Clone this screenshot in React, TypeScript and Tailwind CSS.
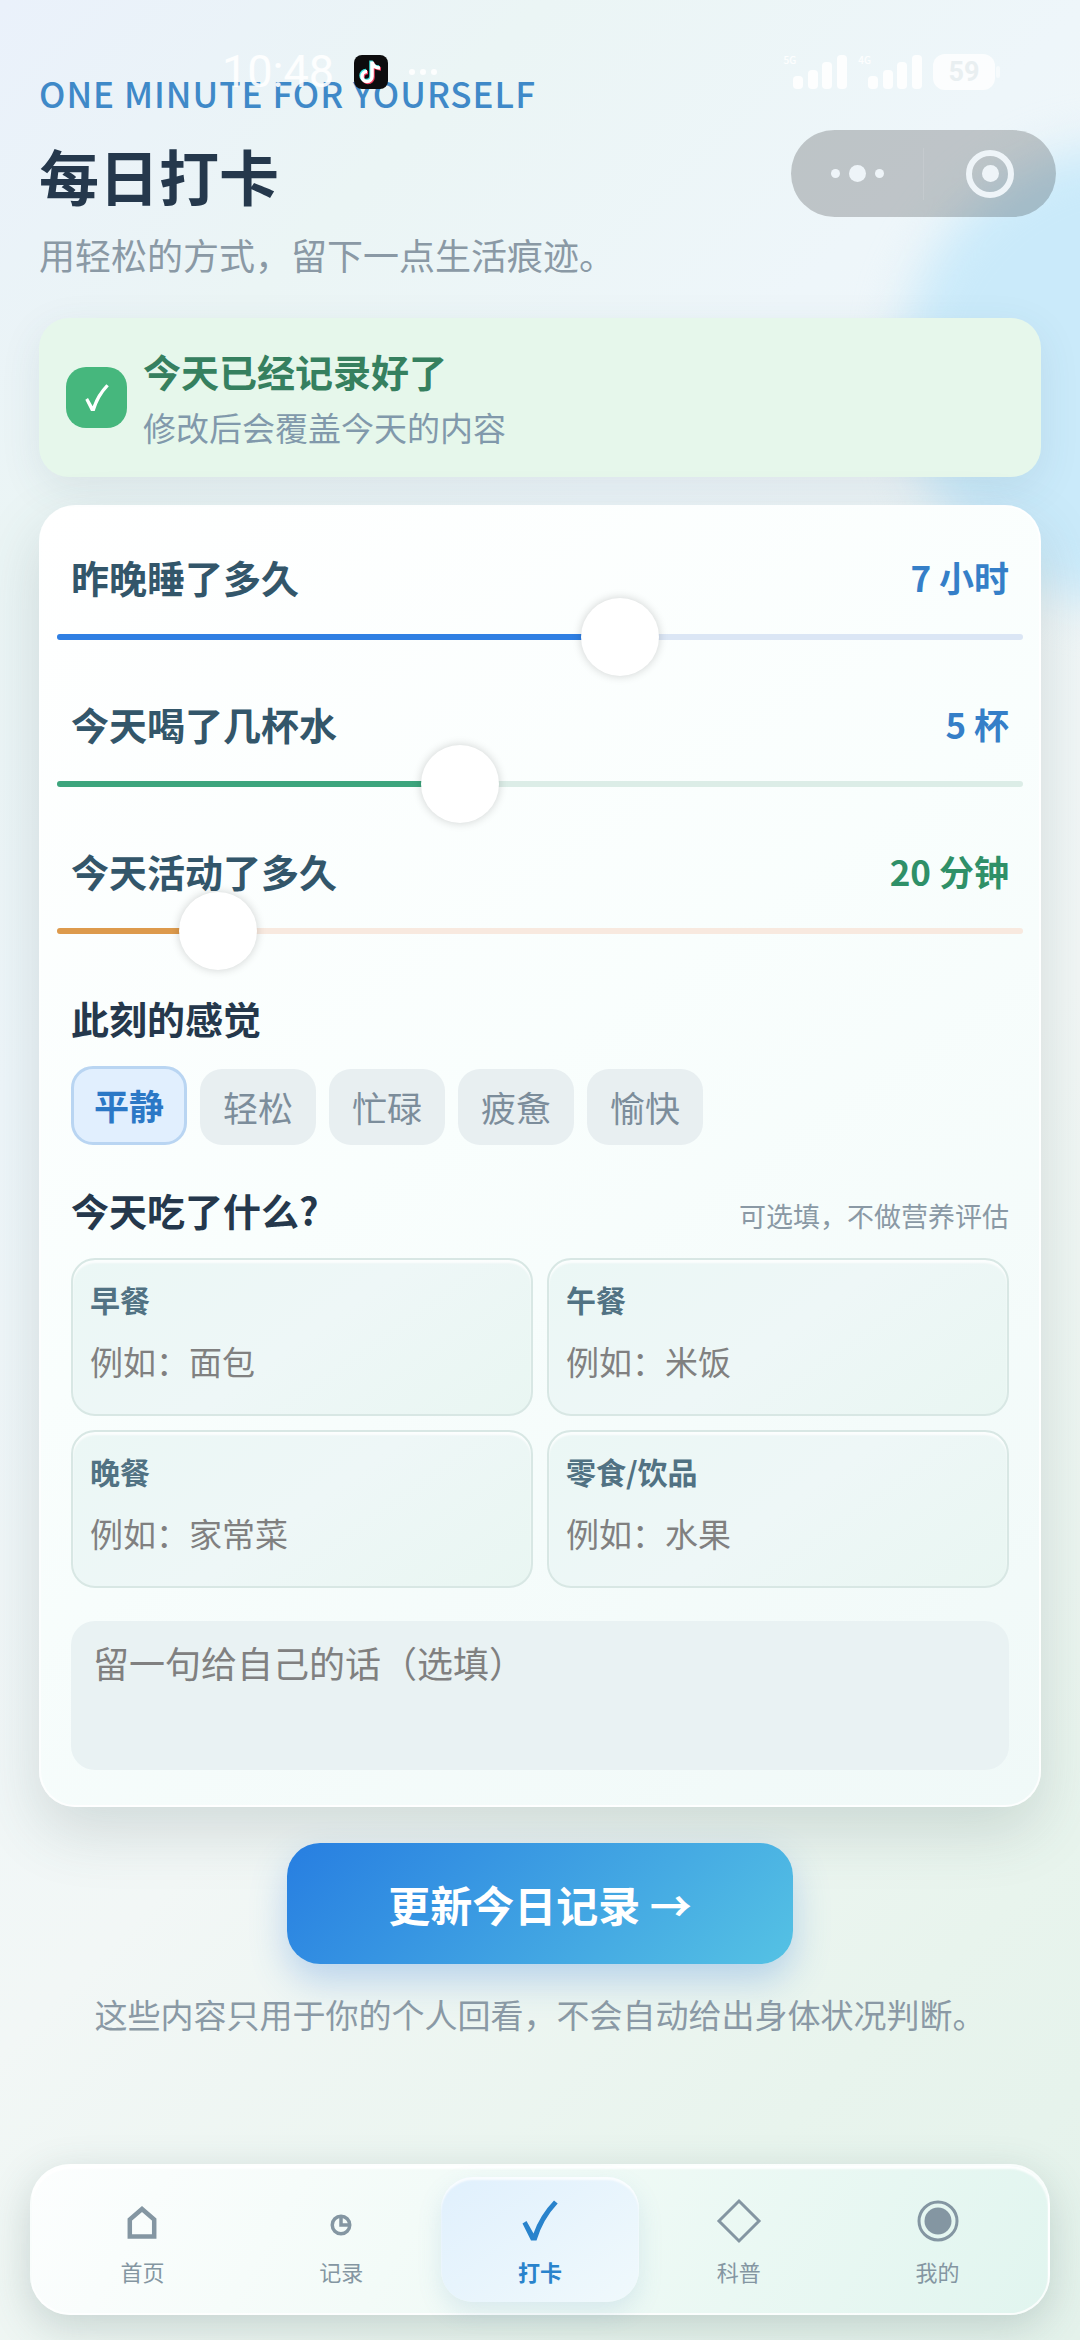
import { useState } from "react";

const sliderList = [
  {
    id: "sleep",
    label: "昨晚睡了多久",
    unit: "小时",
    max: 12,
    step: 1,
    value: 7,
    fill: "bg-[#2f7fe3]",
    track: "bg-[#dbe6f5]",
    text: "text-[#357fc8]",
  },
  {
    id: "water",
    label: "今天喝了几杯水",
    unit: "杯",
    max: 12,
    step: 1,
    value: 5,
    fill: "bg-[#3da57d]",
    track: "bg-[#dcede7]",
    text: "text-[#357fc8]",
  },
  {
    id: "activity",
    label: "今天活动了多久",
    unit: "分钟",
    max: 120,
    step: 5,
    value: 20,
    fill: "bg-[#dd9a4c]",
    track: "bg-[#f8e9df]",
    text: "text-[#2f9068]",
  },
];

const moods = ["平静", "轻松", "忙碌", "疲惫", "愉快"];

const meals = [
  { id: "breakfast", label: "早餐", placeholder: "例如：面包" },
  { id: "lunch", label: "午餐", placeholder: "例如：米饭" },
  { id: "dinner", label: "晚餐", placeholder: "例如：家常菜" },
  { id: "snack", label: "零食/饮品", placeholder: "例如：水果" },
];

const HomeIcon = () => (
  <svg className="w-12 h-12" viewBox="0 0 48 48" fill="none" stroke="currentColor" strokeWidth="4.5">
    <path d="M11.8 22.500V39.500H36.200V22.500L24 12Z" />
  </svg>
);

const ClockIcon = () => (
  <svg className="w-12 h-12" viewBox="0 0 48 48" fill="none" stroke="currentColor" strokeWidth="3.5">
    <circle cx="24" cy="28" r="8.75" />
    <path d="M24 19V28H33" />
  </svg>
);

const CheckIcon = ({ className }: { className: string }) => (
  <svg className={className} viewBox="0 0 48 48" fill="currentColor">
    <path d="M6.500 26.500L10.500 24L17.500 36.500Q24 18 38 3.500L41.700 6.500Q27 22 20.500 43.500H15Z" />
  </svg>
);

const DiamondIcon = () => (
  <svg className="w-12 h-12" viewBox="0 0 48 48" fill="none" stroke="currentColor" strokeWidth="3">
    <path d="M24 4L44 24L24 44L4 24Z" />
  </svg>
);

const ProfileIcon = () => (
  <svg className="w-12 h-12" viewBox="0 0 48 48" fill="none" stroke="currentColor" strokeWidth="3">
    <circle cx="24" cy="24" r="19" />
    <circle cx="24" cy="24" r="13.500" fill="currentColor" stroke="none" />
  </svg>
);

const tabs = [
  { label: "首页", icon: <HomeIcon /> },
  { label: "记录", icon: <ClockIcon /> },
  { label: "打卡", icon: <CheckIcon className="w-12 h-12" /> },
  { label: "科普", icon: <DiamondIcon /> },
  { label: "我的", icon: <ProfileIcon /> },
];

const SignalBars = ({ label }: { label: string }) => (
  <div className="flex items-start">
    <span className="text-[10px] leading-3 font-medium">{label}</span>
    <svg className="w-14 h-9 -ml-1" viewBox="0 0 56 36" fill="currentColor">
      <rect x="1" y="22" width="10" height="13" rx="4" />
      <rect x="16" y="16" width="10" height="19" rx="4" />
      <rect x="30" y="8" width="10" height="27" rx="4" />
      <rect x="45" y="1" width="10" height="34" rx="4" />
    </svg>
  </div>
);

const StatusBar = () => (
  <div className="absolute inset-x-0 top-[52px] z-10 h-10 pl-[222px] pr-20 flex items-center justify-between text-white/90">
    <div className="flex items-center">
      <span className="text-[45px] leading-10 font-['Roboto','Noto_Sans_CJK_SC',sans-serif]">
        10:48
      </span>
      <svg className="w-[34px] h-[34px] ml-5" viewBox="0 0 34 34" fill="none">
        <rect width="34" height="34" rx="8" fill="#0c0c0e" />
        <g strokeWidth="3.5">
          <path d="M18 6.500V21.500A5 5 0 1 1 13 16.500M18 7Q19 12.500 26 13" stroke="#ee3a5c" transform="translate(1 1)" />
          <path d="M18 6.500V21.500A5 5 0 1 1 13 16.500M18 7Q19 12.500 26 13" stroke="#3de3e0" transform="translate(-1 -1)" />
          <path d="M18 6.500V21.500A5 5 0 1 1 13 16.500M18 7Q19 12.500 26 13" stroke="#fff" />
        </g>
      </svg>
      <svg className="w-8 h-2 ml-5" viewBox="0 0 32 8" fill="currentColor">
        <circle cx="4" cy="4" r="3" />
        <circle cx="15" cy="4" r="3" />
        <circle cx="26" cy="4" r="3" />
      </svg>
    </div>
    <div className="flex items-center gap-[10px]">
      <SignalBars label="5G" />
      <SignalBars label="4G" />
      <div className="flex items-center">
        <span className="w-[62px] h-9 rounded-xl bg-white/80 flex items-center justify-center text-[27px] leading-9 font-bold text-[#e9eff1] font-['Roboto',sans-serif]">
          59
        </span>
        <span className="w-1 h-3 ml-px rounded-full bg-white/50" />
      </div>
    </div>
  </div>
);

const CapsuleMenu = () => (
  <div className="absolute right-6 top-[130px] z-10 w-[265px] h-[87px] rounded-full bg-black/20 flex items-center text-[#eef4f8]">
    <button aria-label="更多" className="flex-1 h-full flex items-center justify-center gap-[9px]">
      <span className="w-[9px] h-[9px] rounded-full bg-current" />
      <span className="w-[17px] h-[17px] rounded-full bg-current" />
      <span className="w-[9px] h-[9px] rounded-full bg-current" />
    </button>
    <span className="w-px h-[52px] bg-white/10" />
    <button aria-label="关闭" className="flex-1 h-full flex items-center justify-center">
      <span className="w-12 h-12 rounded-full border-6 border-current flex items-center justify-center">
        <span className="w-[17px] h-[17px] rounded-full bg-current" />
      </span>
    </button>
  </div>
);

const App = () => {
  const [values, setValues] = useState(sliderList.map((s) => s.value));
  const [mood, setMood] = useState("平静");
  const [tab, setTab] = useState("打卡");

  const handleSlide = (index: number, value: number) => {
    setValues(values.map((v, i) => (i === index ? value : v)));
  };

  return (
    <div className="relative min-h-screen flex flex-col overflow-hidden font-['Noto_Sans_CJK_SC',sans-serif] bg-[linear-gradient(135deg,#eaf1fb_0%,#ebf5f5_16%,#eef6fa_32%,#f2f7f6_60%,#e8f4ed_85%,#e4f2eb_100%)]">
      <div className="absolute -right-[280px] top-[145px] w-[460px] h-[460px] rounded-full bg-[#caeafa] blur-xl" />
      <StatusBar />
      <CapsuleMenu />

      <main className="relative px-[39px] pt-[67px] flex flex-col">
        <header className="flex flex-col">
          <p className="text-[35px] leading-[52px] font-medium tracking-[1px] text-[#3f89c8]">
            ONE MINUTE FOR YOURSELF
          </p>
          <h1 className="mt-[14px] text-[60px] leading-[84px] font-bold text-[#25384c]">每日打卡</h1>
          <p className="mt-[10px] text-[36px] leading-[54px] text-[#8a99a5]">
            用轻松的方式，留下一点生活痕迹。
          </p>
        </header>

        <section className="mt-[37px] h-[159px] px-[27px] flex items-center gap-4 rounded-[30px] bg-[#e6f7eb] shadow-[0_12px_40px_rgba(60,90,110,0.1)]">
          <span className="w-[61px] h-[61px] rounded-[20px] bg-[#46b77d] text-white flex items-center justify-center">
            <CheckIcon className="w-8 h-8" />
          </span>
          <div className="flex flex-col">
            <strong className="text-[38px] leading-[58px] font-bold text-[#36805f]">
              今天已经记录好了
            </strong>
            <span className="text-[33px] leading-[54px] text-[#8199ab]">修改后会覆盖今天的内容</span>
          </div>
        </section>

        <section className="mt-7 px-[30px] pt-[41px] pb-[35px] rounded-[36px] border-2 border-white/80 bg-[linear-gradient(145deg,#ffffff_0%,#f9fefd_45%,#f0f9f8_100%)] shadow-[0_24px_60px_rgba(60,90,90,0.18)] flex flex-col">
          {sliderList.map((slider, index) => (
            <div key={slider.id} className="h-[147px] flex flex-col">
              <div className="flex justify-between leading-[58px] font-bold">
                <label htmlFor={slider.id} className="text-[38px] text-[#33566a]">
                  {slider.label}
                </label>
                <span className={`text-[35px] ${slider.text}`}>
                  {values[index]} {slider.unit}
                </span>
              </div>
              <div className="relative -mx-[14px] h-[62px] flex items-center">
                <div className={`w-full h-[6px] rounded-full ${slider.track}`}>
                  <div
                    className={`h-full rounded-full ${slider.fill}`}
                    style={{ width: `${(values[index] / slider.max) * 100}%` }}
                  />
                </div>
                <input
                  id={slider.id}
                  type="range"
                  min={0}
                  max={slider.max}
                  step={slider.step}
                  value={values[index]}
                  onChange={(e) => handleSlide(index, Number(e.target.value))}
                  className="absolute -left-[39px] w-[calc(100%+78px)] h-[78px] appearance-none bg-transparent [&::-webkit-slider-thumb]:appearance-none [&::-webkit-slider-thumb]:w-[78px] [&::-webkit-slider-thumb]:h-[78px] [&::-webkit-slider-thumb]:rounded-full [&::-webkit-slider-thumb]:bg-white [&::-webkit-slider-thumb]:shadow-[0_0_10px_rgba(0,0,0,0.18)]"
                />
              </div>
            </div>
          ))}

          <h2 className="text-[38px] leading-[58px] font-bold text-[#25384c]">此刻的感觉</h2>
          <div className="mt-[19px] flex items-end gap-[13px]">
            {moods.map((item) => (
              <button
                key={item}
                onClick={() => setMood(item)}
                className={
                  item === mood
                    ? "h-[79px] px-5 rounded-[22px] border-3 border-[#b9d5f2] bg-[#e1effe] text-[35px] font-bold text-[#2b78c6]"
                    : "h-[76px] px-[23px] rounded-[22px] bg-[#e8eff1] text-[35px] text-[#7c8d9b]"
                }
              >
                {item}
              </button>
            ))}
          </div>

          <div className="mt-9 flex items-end justify-between">
            <h2 className="text-[38px] leading-[58px] font-bold text-[#25384c]">今天吃了什么?</h2>
            <span className="text-[27px] leading-[46px] text-[#8a99a5]">可选填，不做营养评估</span>
          </div>
          <div className="mt-[19px] grid grid-cols-2 gap-[14px]">
            {meals.map((meal) => (
              <div
                key={meal.id}
                className="h-[158px] px-[17px] pt-4 flex flex-col rounded-[24px] border-2 border-[#d8e7e4] bg-[linear-gradient(145deg,#ebf7f5,#eef7f7_50%,#e9f6f2)] shadow-[inset_0_3px_2px_rgba(255,255,255,0.8)]"
              >
                <label htmlFor={meal.id} className="text-[30px] leading-[46px] font-bold text-[#517283]">
                  {meal.label}
                </label>
                <input
                  id={meal.id}
                  type="text"
                  placeholder={meal.placeholder}
                  className="w-full h-[78px] bg-transparent text-[33px] text-[#25384c] outline-none placeholder:text-[#808080]"
                />
              </div>
            ))}
          </div>

          <textarea
            aria-label="留一句给自己的话"
            placeholder="留一句给自己的话（选填）"
            className="mt-[33px] h-[149px] px-[22px] py-[14px] resize-none rounded-[24px] bg-[#e9f2f3] text-[36px] leading-[54px] text-[#25384c] outline-none placeholder:text-[#808080]"
          />
        </section>

        <button className="mt-9 h-[121px] w-[506px] self-center rounded-[33px] bg-[linear-gradient(135deg,#277ee1,#55c2e4)] text-[42px] font-bold text-white shadow-[0_16px_36px_rgba(60,130,220,0.3)]">
          更新今日记录 →
        </button>
        <p className="mt-[25px] text-center text-[33px] leading-[50px] text-[#8a99a5]">
          这些内容只用于你的个人回看，不会自动给出身体状况判断。
        </p>
      </main>

      <nav className="relative mt-auto mx-[30px] mb-[25px] h-[151px] p-[11px] flex rounded-[40px] border-2 border-white/80 bg-[linear-gradient(120deg,#fcfefe,#f0faf6_50%,#e1f5ef)] shadow-[0_12px_40px_rgba(60,90,90,0.22),inset_0_3px_2px_rgba(255,255,255,0.9)]">
        {tabs.map((item) => (
          <button
            key={item.label}
            onClick={() => setTab(item.label)}
            className={
              item.label === tab
                ? "flex-1 pt-1 flex flex-col items-center justify-center rounded-[32px] bg-[linear-gradient(145deg,#e0f0fd,#f0f9fc)] font-bold text-[#2983cc] shadow-[0_10px_24px_rgba(80,140,190,0.15),inset_0_3px_2px_rgba(255,255,255,0.8)]"
                : "flex-1 pt-1 flex flex-col items-center justify-center text-[#8496a2]"
            }
          >
            {item.icon}
            <span className="mt-[10px] text-[22px] leading-8">{item.label}</span>
          </button>
        ))}
      </nav>
    </div>
  );
};

export default App;
